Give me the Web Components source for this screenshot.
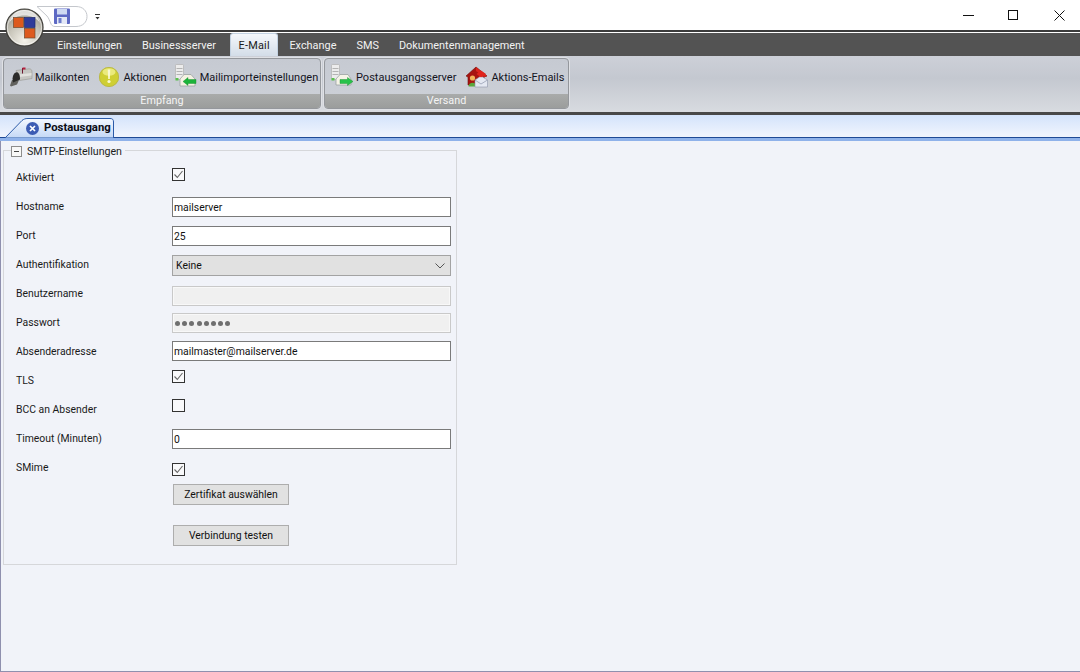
<!DOCTYPE html>
<html lang="de">
<head>
<meta charset="utf-8">
<title>Postausgang</title>
<style>
  html, body { margin: 0; height: 100%; overflow: hidden; }
  body { font: 10.4px Roboto, "Liberation Sans", Arial, sans-serif; color: #111; background: #f1f3f9; }
  app-shell { height: 672px; }
</style>
</head>
<body>
<app-shell>
  <title-bar slot="title"></title-bar>
  <ribbon-tabs slot="tabs" active="E-Mail" items="Einstellungen,Businessserver,E-Mail,Exchange,SMS,Dokumentenmanagement"></ribbon-tabs>
  <ribbon-bar slot="ribbon">
    <ribbon-group label="Empfang" style="width:318px">
      <ribbon-button icon="mailbox" gap="3" style="margin-left:6px">Mailkonten</ribbon-button>
      <ribbon-button icon="alert" gap="2" style="margin-left:10px">Aktionen</ribbon-button>
      <ribbon-button icon="import" gap="3" style="margin-left:8px">Mailimporteinstellungen</ribbon-button>
    </ribbon-group>
    <ribbon-group label="Versand" style="width:245px">
      <ribbon-button icon="export" gap="3" style="margin-left:6px">Postausgangsserver</ribbon-button>
      <ribbon-button icon="house" gap="4" style="margin-left:9px">Aktions-Emails</ribbon-button>
    </ribbon-group>
  </ribbon-bar>
  <doc-strip slot="strip"><doc-tab>Postausgang</doc-tab></doc-strip>
  <group-box label="SMTP-Einstellungen">
    <form-row label="Aktiviert"><win-check checked style="margin-top:5px"></win-check></form-row>
    <form-row label="Hostname"><win-input value="mailserver" style="margin-top:5px"></win-input></form-row>
    <form-row label="Port"><win-input value="25" style="margin-top:5px"></win-input></form-row>
    <form-row label="Authentifikation"><win-select value="Keine" style="margin-top:5px"></win-select></form-row>
    <form-row label="Benutzername"><win-input disabled style="margin-top:7px"></win-input></form-row>
    <form-row label="Passwort"><win-input disabled password style="margin-top:5px"></win-input></form-row>
    <form-row label="Absenderadresse"><win-input value="mailmaster@mailserver.de" style="margin-top:4px"></win-input></form-row>
    <form-row label="TLS"><win-check checked style="margin-top:4px"></win-check></form-row>
    <form-row label="BCC an Absender"><win-check style="margin-top:4px"></win-check></form-row>
    <form-row label="Timeout (Minuten)"><win-input value="0" style="margin-top:5px"></win-input></form-row>
    <form-row label="SMime"><win-check checked style="margin-top:10px"></win-check></form-row>
    <form-row><win-button style="margin-top:2px">Zertifikat auswählen</win-button></form-row>
    <form-row><win-button style="margin-top:20px">Verbindung testen</win-button></form-row>
  </group-box>
</app-shell>

<script>
// kleine Hilfsfunktion: Shadow DOM mit Markup fuellen
function shadow(el, html) {
  if (!el.shadowRoot) el.attachShadow({ mode: 'open' });
  el.shadowRoot.innerHTML = html;
}

class AppShell extends HTMLElement {
  connectedCallback() {
    shadow(this, `
      <style>
        :host { display: flex; flex-direction: column; background: #f1f3f9; border-left: 1px solid #8f90ae; border-bottom: 1px solid #8f90ae; box-sizing: border-box; position: relative; }
        main { flex: 1; padding: 9px 0 0 2px; }
      </style>
      <slot name="title"></slot>
      <slot name="tabs"></slot>
      <slot name="ribbon"></slot>
      <slot name="strip"></slot>
      <main><slot></slot></main>
    `);
  }
}

class TitleBar extends HTMLElement {
  connectedCallback() {
    shadow(this, `
      <style>
        :host { display: flex; align-items: center; height: 30px; background: #fff; margin-left: -1px; position: relative; z-index: 2; }
        .orb { position: absolute; left: 5px; top: 8px; z-index: 2; }
        .qat { position: absolute; left: 36px; top: 5px; }
        .ctl { margin-left: auto; margin-right: -2px; display: flex; }
        .ctl span { width: 45.5px; height: 30px; display: grid; place-items: center; }
      </style>
      <svg class="qat" width="70" height="24" viewBox="0 0 70 24">
        <path d="M1 1.500H40C47 1.500 51 6 51 11.500S47 21.500 40 21.500H19C14 21.500 15 16 11 11Z" fill="#fff" stroke="#c4c7cc"/>
        <rect x="18" y="3.500" width="16" height="15.500" rx="1" fill="#5d69c4"/>
        <rect x="21" y="4" width="10" height="5.500" fill="#cfdaf2"/>
        <rect x="21" y="12" width="10" height="7" fill="#e3e8f6"/>
        <rect x="22.500" y="13" width="3" height="5" fill="#6d7ccb"/>
        <path d="M59 9h5v1h-5zM59.500 12h4l-2 2.500z" fill="#333"/>
      </svg>
      <svg class="orb" width="40" height="40" viewBox="0 0 40 40">
        <defs>
          <radialGradient id="o" cx=".5" cy=".85" r=".8">
            <stop offset="0" stop-color="#f4f2ea"/><stop offset=".55" stop-color="#c9c6bb"/><stop offset=".85" stop-color="#a9a69b"/><stop offset="1" stop-color="#8f8b7d"/>
          </radialGradient>
        </defs>
        <circle cx="19.500" cy="19.500" r="18.500" fill="url(#o)" stroke="#3f3e3a" stroke-width="1.200"/>
        <path d="M4 15C10 5 29 5 35 15 32 4.500 25 2 19.500 2S7 4.500 4 15Z" fill="#fff" opacity=".7"/>
        <circle cx="19.500" cy="19.500" r="17" fill="none" stroke="#fff" stroke-width="1" opacity=".6"/>
        <rect x="8.500" y="9.500" width="10" height="10" fill="#dd5a1e" stroke="#6e4a30" stroke-width=".7"/>
        <rect x="19.500" y="9.500" width="10.500" height="10" fill="#2f3b9a" stroke="#1e2a6e" stroke-width=".7"/>
        <rect x="19.500" y="20.500" width="10.500" height="9.500" fill="#dd5a1e" stroke="#6e4a30" stroke-width=".7"/>
      </svg>
      <div class="ctl">
        <span><svg width="11" height="11"><path d="M0 5.500H11" stroke="#111"/></svg></span>
        <span><svg width="11" height="11"><rect x=".5" y=".5" width="9" height="9" fill="none" stroke="#111"/></svg></span>
        <span><svg width="11" height="11"><path d="M.5 .5L10.500 10.500M10.500 .5L.5 10.500" stroke="#111"/></svg></span>
      </div>
    `);
  }
}

class RibbonTabs extends HTMLElement {
  connectedCallback() {
    const active = this.getAttribute('active');
    const items = this.getAttribute('items').split(',');
    const html = items.map(t => `<span class="${t === active ? 'on' : ''}">${t}</span>`).join('');
    shadow(this, `
      <style>
        :host { display: flex; height: 26px; margin-left: -1px; padding-left: 47px; box-sizing: border-box; align-items: flex-end; background: #535353; border-top: 2px solid #3c3c3c; box-shadow: inset 0 1px 0 #fff; font-size: 10.900px; }
        span { height: 22px; line-height: 23px; padding: 0 10px; color: #f2f2f2; box-sizing: border-box; white-space: nowrap; }
        span:nth-child(4) { letter-spacing: .25px; padding-right: 11px; }
        span.on { color: #1a1a1a; margin: 0 1px 0 4px; padding: 0 7.500px; height: 23px; line-height: 24px; background: linear-gradient(#f4f7fb, #d3dde8); border: 1px solid #c3d2e2; border-bottom: 0; border-radius: 3px 3px 0 0; }
      </style>
      ${html}
    `);
  }
}

class RibbonBar extends HTMLElement {
  connectedCallback() {
    shadow(this, `
      <style>
        :host { display: flex; gap: 3px; height: 59px; margin-left: -1px; padding: 2px 0 0 3px; box-sizing: border-box; border-bottom: 3px solid #484848; background: linear-gradient(#cdd0d8 0, #c4c8d0 40%, #d8dbe0 100%); font-size: 11px; }
      </style>
      <slot></slot>
    `);
  }
}

class RibbonGroup extends HTMLElement {
  connectedCallback() {
    shadow(this, `
      <style>
        :host { display: flex; flex-direction: column; height: 51px; box-sizing: border-box; border: 1px solid #94979c; border-radius: 4px; overflow: hidden; background: linear-gradient(#c6cad2, #cdd1d8); box-shadow: 0 0 0 1px #dfe1e5; }
        .items { flex: 1; display: flex; align-items: center; padding-top: 1px; }
        .label { height: 14px; line-height: 14px; font-size: 10.800px; text-align: center; color: #f4f4f4; background: linear-gradient(#a9abaa, #9b9d9c); }
      </style>
      <div class="items"><slot></slot></div>
      <div class="label">${this.getAttribute('label')}</div>
    `);
  }
}

const ICONS = {
  mailbox: `<path d="M0 20.500L2 15H9L7 19.500 1 21.500Z" fill="#62625e"/>
    <path d="M6 5.500L19 3.800C21 3.800 22 5 22 7V13.500L9.500 15.500Z" fill="#c6c6c2" stroke="#8a8a84" stroke-width=".5"/>
    <path d="M8 9.500L21.500 8V10.500L9 12Z" fill="#e2e2de"/>
    <path d="M2.500 13.500C3 9 5 7 7 7.300 9.500 8 10 11 10 14.500L3 17.500Z" fill="#2b2b29"/>
    <path d="M12.500 3V8.500" stroke="#6f1730" stroke-width="1"/><path d="M12.500 2.500H15.500V4.500H12.500Z" fill="#b51f3d"/>`,
  alert: `<circle cx="10" cy="12" r="10" fill="#cfcf33"/><circle cx="10" cy="12" r="9.600" fill="none" stroke="#b5b44a" stroke-width=".8"/>
    <ellipse cx="10" cy="7" rx="6.500" ry="3.800" fill="#efef88" opacity=".85"/>
    <path d="M8.700 4.500H11.300L10.800 14H9.200Z" fill="#f8f8d2"/><circle cx="10" cy="16.500" r="1.600" fill="#f8f8d2"/>`,
  import: `<rect x="0.500" y="-0.500" width="8" height="15" rx="1" fill="#ececec" stroke="#b0b0b0" stroke-width=".7"/>
    <path d="M1.500 3.500H7.500M1.500 6.500H7.500M1.500 9.500H7.500" stroke="#a4a4a4" stroke-width=".8"/><rect x="0.500" y="13" width="3" height="2.500" fill="#5bc04e"/>
    <path d="M5 14L9 9.500H16L20 14V21H5Z" fill="#f4f1e2" stroke="#9aa2a2" stroke-width=".8"/>
    <path d="M8 16.500L13 12.500V14.500H21V18.500H13V20.500Z" fill="#1bb33a" stroke="#0e8a26" stroke-width=".4"/>`,
  export: `<rect x="0.500" y="-0.500" width="8" height="15" rx="1" fill="#ececec" stroke="#b0b0b0" stroke-width=".7"/>
    <path d="M1.500 3.500H7.500M1.500 6.500H7.500M1.500 9.500H7.500" stroke="#a4a4a4" stroke-width=".8"/><rect x="0.500" y="13" width="3" height="2.500" fill="#5bc04e"/>
    <path d="M5 14L9 9.500H17L20 14V20H5Z" fill="#f6f4e8" stroke="#9aa2a2" stroke-width=".8"/>
    <path d="M22 16.500L16.500 12.500V14.500H9V18.500H16.500V20.500Z" fill="#27c24a" stroke="#0e8a26" stroke-width=".4"/>`,
  house: `<path d="M1 11L11 2 22 11 19 12V20H3V12Z" fill="#a81410" stroke="#6b0b08" stroke-width=".6"/>
    <path d="M11 2L22 11 19 12 11 6Z" fill="#d9241c"/>
    <circle cx="7.500" cy="13" r="2.600" fill="#f2b45a"/><path d="M3.500 21.500C3.500 16.500 11.500 16.500 11.500 21.500Z" fill="#5aa83c"/>
    <path d="M10 15L16 11 22.500 15V22H10Z" fill="#e4e8f2" stroke="#8d95aa" stroke-width=".6"/>
    <path d="M10 15L16 19 22.500 15" fill="none" stroke="#8d95aa" stroke-width=".7"/>
    <path d="M11.500 9L16 5.500 21 9 16 12.500Z" fill="#e0241c"/>`
};

class RibbonButton extends HTMLElement {
  connectedCallback() {
    const gap = this.getAttribute('gap') || 3;
    shadow(this, `
      <style>
        :host { display: flex; align-items: center; gap: ${gap}px; color: #14141e; white-space: nowrap; }
        svg { width: 22px; height: 24px; flex: none; overflow: visible; }
      </style>
      <svg viewBox="0 0 22 24">${ICONS[this.getAttribute('icon')]}</svg>
      <slot></slot>
    `);
  }
}

class DocStrip extends HTMLElement {
  connectedCallback() {
    shadow(this, `
      <style>
        :host { display: flex; align-items: flex-end; height: 26px; margin-left: -1px; box-sizing: border-box; padding-left: 5px;
          background: linear-gradient(#1f4a95, #1f4a95) bottom / 100% 1px no-repeat, linear-gradient(#d3e3fb, #eef3fd 85%);
          border-bottom: 3px solid #8fb2ea; }
      </style>
      <slot></slot>
    `);
  }
}

class DocTab extends HTMLElement {
  connectedCallback() {
    shadow(this, `
      <style>
        :host { display: block; position: relative; width: 109px; height: 20px; font-weight: bold; font-size: 11.300px; color: #0c0c14; white-space: nowrap; }
        svg.bg { position: absolute; left: 0; top: 0; }
        .x { position: absolute; left: 21px; top: 4px; }
        .t { position: absolute; left: 39px; top: 2px; line-height: 16px; }
      </style>
      <svg class="bg" width="109" height="20" viewBox="0 0 109 20">
        <defs><linearGradient id="g" x1="0" y1="0" x2="0" y2="1"><stop offset="0" stop-color="#f4f8fe"/><stop offset="1" stop-color="#c4d8f6"/></linearGradient></defs>
        <path d="M0 20L17 2.500C19 1 20 .5 23 .5H105C107.500 .5 108.500 1.500 108.500 4V20Z" fill="url(#g)" stroke="#2a5aa8"/>
      </svg>
      <svg class="x" width="13" height="13" viewBox="0 0 13 13">
        <circle cx="6.500" cy="6.500" r="6.500" fill="#3c5cb4"/>
        <path d="M4 4L9 9M9 4L4 9" stroke="#fff" stroke-width="1.700"/>
      </svg>
      <span class="t"><slot></slot></span>
    `);
  }
}

class GroupBox extends HTMLElement {
  connectedCallback() {
    shadow(this, `
      <style>
        :host { display: block; width: 454px; box-sizing: border-box; border: 1px solid #d6d7da; padding: 12px 0 18px 12px; }
        .legend { display: flex; align-items: center; gap: 5px; width: max-content; height: 14px; margin: -19px 0 0 -4px; padding: 0 3px 0 0; background: #f1f3f9; color: #1c1c1c; font-size: 10.650px; }
        .box { width: 9px; height: 9px; border: 1px solid #8d8d8d; background: #f8f8f8; display: grid; place-items: center; margin-left: -1px; }
        .box i { display: block; width: 5px; height: 1px; background: #444; }
        .rows { padding-top: 5px; }
      </style>
      <div class="legend"><span class="box"><i></i></span>${this.getAttribute('label')}</div>
      <div class="rows"><slot></slot></div>
    `);
  }
}

class FormRow extends HTMLElement {
  connectedCallback() {
    const label = this.getAttribute('label');
    shadow(this, `
      <style>
        :host { display: grid; grid-template-columns: 156px 279px; min-height: 29px; align-items: start; }
        :host(:not([label])) { min-height: 0; }
        label { line-height: 14px; padding-top: 7.500px; color: #1a1a1a; }
      </style>
      <label>${label || ''}</label>
      <slot></slot>
    `);
  }
}

class WinInput extends HTMLElement {
  connectedCallback() {
    const off = this.hasAttribute('disabled');
    const text = this.hasAttribute('password') ? '<span class="dots"><i></i><i></i><i></i><i></i><i></i><i></i><i></i><i></i></span>' : (this.getAttribute('value') || '');
    shadow(this, `
      <style>
        :host { display: block; height: 20px; box-sizing: border-box; padding: 0 1px; line-height: 19px; color: #111;
          border: 1px solid ${off ? '#c9c9c9' : '#7a7a7a'}; background: ${off ? '#f0f0f0' : '#fff'}; box-shadow: ${off ? 'inset 0 0 0 1px #f8f8f8' : 'none'}; }
        .dots { display: flex; gap: 2.200px; height: 100%; align-items: center; padding-left: 1px; }
        .dots i { width: 5px; height: 5px; border-radius: 50%; background: #6f6f6f; }
      </style>
      ${text}
    `);
  }
}

class WinSelect extends HTMLElement {
  connectedCallback() {
    shadow(this, `
      <style>
        :host { display: flex; align-items: center; justify-content: space-between; height: 21px; box-sizing: border-box; padding: 0 5px 0 3px; border: 1px solid #a3a3a3; background: #e1e1e1; color: #111; }
      </style>
      ${this.getAttribute('value')}
      <svg width="10" height="6"><path d="M.5 .5L5 5 9.500 .5" fill="none" stroke="#555"/></svg>
    `);
  }
}

class WinCheck extends HTMLElement {
  connectedCallback() {
    shadow(this, `
      <style>
        :host { display: block; width: 13px; height: 13px; box-sizing: border-box; border: 1px solid #333; background: #f9f9fb; }
        svg { display: block; }
      </style>
      ${this.hasAttribute('checked') ? '<svg width="11" height="11"><path d="M1.500 5.500L4.300 8.500 9.500 2" fill="none" stroke="#666" stroke-width="1.100"/></svg>' : ''}
    `);
  }
}

class WinButton extends HTMLElement {
  connectedCallback() {
    shadow(this, `
      <style>
        :host { display: block; width: 116px; height: 21px; margin-left: 1px; box-sizing: border-box; border: 1px solid #adadad; background: #e1e1e1; color: #111; text-align: center; line-height: 19px; }
      </style>
      <slot></slot>
    `);
  }
}

customElements.define('app-shell', AppShell);
customElements.define('title-bar', TitleBar);
customElements.define('ribbon-tabs', RibbonTabs);
customElements.define('ribbon-bar', RibbonBar);
customElements.define('ribbon-group', RibbonGroup);
customElements.define('ribbon-button', RibbonButton);
customElements.define('doc-strip', DocStrip);
customElements.define('doc-tab', DocTab);
customElements.define('group-box', GroupBox);
customElements.define('form-row', FormRow);
customElements.define('win-input', WinInput);
customElements.define('win-select', WinSelect);
customElements.define('win-check', WinCheck);
customElements.define('win-button', WinButton);
</script>
</body>
</html>
